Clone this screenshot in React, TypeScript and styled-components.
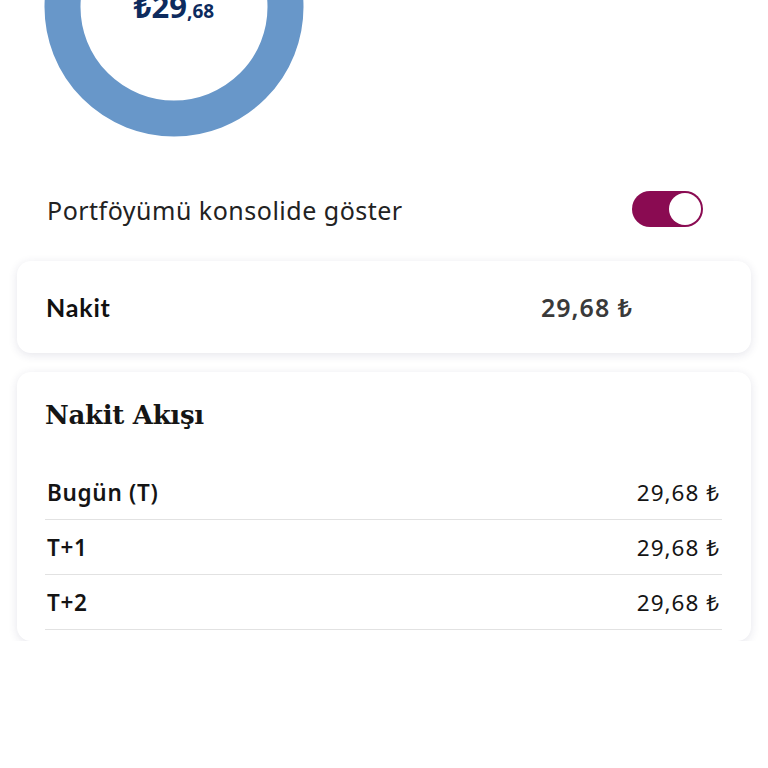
import React from 'react';
import styled, { createGlobalStyle } from 'styled-components';

const GlobalStyle = createGlobalStyle`
  html, body {
    margin: 0;
    padding: 0;
    background: #ffffff;
  }
  body {
    font-family: "Noto Sans", "Open Sans", sans-serif;
    color: #1c1c1c;
  }
`;

const Page = styled.div`
  width: 768px;
  padding: 0 17px;
  box-sizing: border-box;
`;

const DonutArea = styled.div`
  position: relative;
  width: 260px;
  height: 137px;
  margin-left: 27px;
`;

const DonutLabel = styled.div`
  position: absolute;
  top: -9px;
  left: 0;
  right: 0;
  display: flex;
  justify-content: center;
  align-items: baseline;
  color: #0d2b5e;
  font-family: "Noto Sans", sans-serif;
  font-weight: 700;
  line-height: 1;
`;

const Whole = styled.span`
  font-size: 31px;
`;

const Cents = styled.span`
  font-size: 19px;
`;

const ToggleRow = styled.div`
  display: flex;
  align-items: center;
  justify-content: space-between;
  height: 36px;
  margin-top: 54px;
  padding: 0 48px 0 30px;
`;

const ToggleLabel = styled.span`
  font-family: "Noto Sans", sans-serif;
  font-size: 25px;
  color: #222222;
  letter-spacing: 0.5px;
  margin-top: 2px;
`;

const Switch = styled.div<{ $on: boolean }>`
  display: flex;
  justify-content: ${(p) => (p.$on ? 'flex-end' : 'flex-start')};
  align-items: center;
  width: 71px;
  height: 36px;
  border-radius: 18px;
  background: ${(p) => (p.$on ? '#8a0b52' : '#cccccc')};
  padding: 2px;
  box-sizing: border-box;
`;

const Knob = styled.div`
  width: 32px;
  height: 32px;
  border-radius: 50%;
  background: #ffffff;
`;

const Card = styled.div`
  background: #ffffff;
  border-radius: 14px;
  box-shadow: 0 2px 10px rgba(40, 40, 90, 0.12);
`;

const CashCard = styled(Card)`
  display: flex;
  align-items: center;
  height: 92px;
  margin-top: 34px;
  padding: 0 118px 0 29px;
`;

const CashLabel = styled.span`
  flex: 1;
  font-family: "Lato", sans-serif;
  font-weight: 700;
  font-size: 25px;
  letter-spacing: 0.8px;
  color: #111111;
`;

const CashValue = styled.span`
  font-family: "Noto Sans", sans-serif;
  font-weight: 600;
  font-size: 25px;
  letter-spacing: 1px;
  color: #3a3a3a;
`;

const FlowCard = styled(Card)`
  margin-top: 19px;
  padding: 28px 29px 11px 28px;
`;

const FlowTitle = styled.h2`
  margin: 0 0 35px;
  font-family: "DejaVu Serif", "Liberation Serif", serif;
  font-weight: 700;
  font-size: 26px;
  color: #151515;
  letter-spacing: -0.3px;
`;

const FlowRow = styled.div`
  display: flex;
  justify-content: space-between;
  align-items: center;
  height: 54px;
  border-bottom: 1px solid #e2e2e2;
  padding: 0 2px;
`;

const FlowLabel = styled.span`
  font-weight: 600;
  font-size: 22.5px;
  letter-spacing: 0.7px;
  color: #141414;
`;

const FlowValue = styled.span`
  font-size: 22.5px;
  letter-spacing: 1px;
  color: #141414;
`;

const flows = [
  { label: 'Bugün (T)', value: '29,68 ₺' },
  { label: 'T+1', value: '29,68 ₺' },
  { label: 'T+2', value: '29,68 ₺' },
];

const Donut = () => (
  <DonutArea>
    <svg width="260" height="137" viewBox="0 0 260 137">
      <circle cx="130" cy="7" r="111.5" fill="none" stroke="#6897c9" strokeWidth="36" />
    </svg>
    <DonutLabel>
      <Whole>₺29</Whole>
      <Cents>,68</Cents>
    </DonutLabel>
  </DonutArea>
);

const App = () => {
  const [consolidated, setConsolidated] = React.useState(true);

  return (
    <Page>
      <GlobalStyle />
      <Donut />
      <ToggleRow>
        <ToggleLabel>Portföyümü konsolide göster</ToggleLabel>
        <Switch $on={consolidated} onClick={() => setConsolidated(!consolidated)}>
          <Knob />
        </Switch>
      </ToggleRow>
      <CashCard>
        <CashLabel>Nakit</CashLabel>
        <CashValue>29,68 ₺</CashValue>
      </CashCard>
      <FlowCard>
        <FlowTitle>Nakit Akışı</FlowTitle>
        {flows.map((f) => (
          <FlowRow key={f.label}>
            <FlowLabel>{f.label}</FlowLabel>
            <FlowValue>{f.value}</FlowValue>
          </FlowRow>
        ))}
      </FlowCard>
    </Page>
  );
};

export default App;
